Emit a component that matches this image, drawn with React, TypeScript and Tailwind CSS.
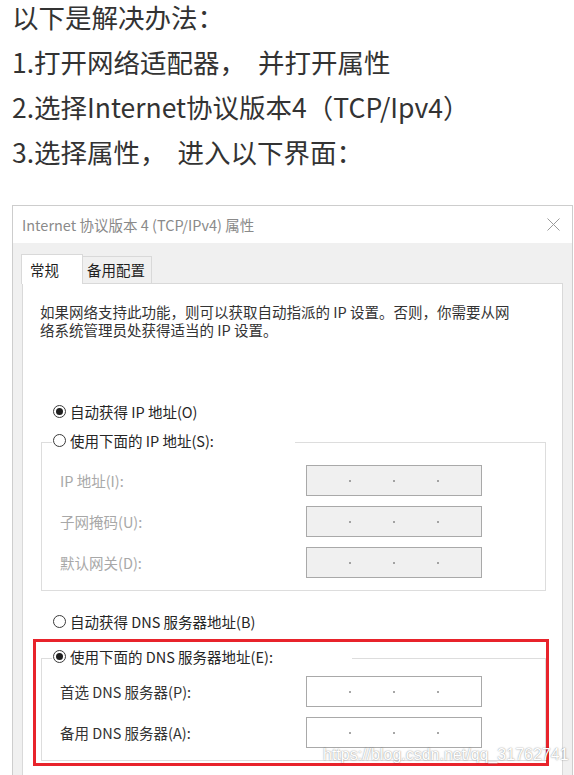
import React from "react";

function Radio({ checked }: { checked?: boolean }) {
  return (
    <span className="w-[13px] h-[13px] rounded-full border border-[#3a3a3a] bg-white flex items-center justify-center shrink-0">
      {checked ? <span className="w-[7px] h-[7px] rounded-full bg-[#1f1f1f]" /> : null}
    </span>
  );
}

function IpBox({ disabled }: { disabled?: boolean }) {
  return (
    <div
      className={
        disabled
          ? "w-[176px] h-[31px] border border-[#a9a9a9] bg-[#f0f0f0] flex items-center"
          : "w-[176px] h-[31px] border border-[#a9a9a9] bg-white flex items-center"
      }
    >
      <span className="flex-1" />
      <span className="w-[2px] h-[2px] rounded-full bg-[#8a8a8a]" />
      <span className="flex-1" />
      <span className="w-[2px] h-[2px] rounded-full bg-[#8a8a8a]" />
      <span className="flex-1" />
      <span className="w-[2px] h-[2px] rounded-full bg-[#8a8a8a]" />
      <span className="flex-1" />
    </div>
  );
}

function Row({ label, disabled }: { label: string; disabled?: boolean }) {
  return (
    <div className="flex items-center h-[31px]">
      <span
        className={
          disabled
            ? "w-[246px] text-[#a8a8a8] whitespace-nowrap"
            : "w-[246px] text-[#333333] whitespace-nowrap"
        }
      >
        {label}
      </span>
      <IpBox disabled={disabled} />
    </div>
  );
}

export default function App() {
  return (
    <div className="w-[574px] h-[775px] bg-white overflow-hidden relative font-['Noto_Sans_CJK_SC',sans-serif]">
      {/* Intro text */}
      <div className="-mt-[6px] pl-[12px] text-[26.5px] leading-[45px] text-[#333333] whitespace-nowrap">
        <div>以下是解决办法：</div>
        <div>
          1.打开网络适配器，<span className="ml-[12px]">并打开属性</span>
        </div>
        <div>2.选择Internet协议版本4（TCP/Ipv4）</div>
        <div>
          3.选择属性，<span className="ml-[11px]">进入以下界面：</span>
        </div>
      </div>

      {/* Dialog */}
      <div className="mt-[31px] ml-[12px] w-[561px] border border-b-0 border-[#cdcdcd] text-[14.5px]">
        {/* Title bar */}
        <div className="h-[37px] bg-white flex items-center justify-between pl-[9px] pr-[12px]">
          <span className="text-[#8a8a8a] whitespace-nowrap">Internet 协议版本 4 (TCP/IPv4) 属性</span>
          <svg width="13" height="13" viewBox="0 0 13 13">
            <path d="M0.5 0.5 L12.5 12.5 M12.5 0.5 L0.5 12.5" stroke="#9a9a9a" strokeWidth="1" fill="none" />
          </svg>
        </div>

        {/* Body */}
        <div className="bg-[#f0f0f0] pt-[11px] px-[9px] h-[600px]">
          {/* Tabs */}
          <div className="flex items-end h-[29px]">
            <div className="relative z-10 -ml-px -mb-px h-[30px] w-[62px] bg-white border border-b-0 border-[#d9d9d9] pl-[8px] flex items-center text-[#1f1f1f]">
              常规
            </div>
            <div className="h-[27px] w-[69px] bg-[#f0f0f0] border border-b-0 border-l-0 border-[#d9d9d9] pl-[4px] flex items-center text-[#1f1f1f]">
              备用配置
            </div>
          </div>

          {/* Panel */}
          <div className="bg-white border border-[#d9d9d9] h-[560px] text-[#262626]">
            <div className="pt-[19px] pl-[17px] leading-[18px] text-[#333333] whitespace-nowrap">
              <div>如果网络支持此功能，则可以获取自动指派的 IP 设置。否则，你需要从网</div>
              <div>络系统管理员处获得适当的 IP 设置。</div>
            </div>

            <div className="mt-[58px] pl-[30px] h-[29px] flex items-center gap-[4px]">
              <Radio checked />
              <span>自动获得 IP 地址(O)</span>
            </div>

            <fieldset className="ml-[18px] w-[505px] border border-[#dddddd] pl-[10px] pb-[12px]">
              <legend className="w-[243px]">
                <div className="h-[33px] pb-[4px] flex items-center gap-[4px] pl-[1px] whitespace-nowrap">
                  <Radio />
                  <span>使用下面的 IP 地址(S):</span>
                </div>
              </legend>
              <div className="pt-[6px] pl-[8px] flex flex-col gap-[10px]">
                <Row label="IP 地址(I):" disabled />
                <Row label="子网掩码(U):" disabled />
                <Row label="默认网关(D):" disabled />
              </div>
            </fieldset>

            <div className="mt-[16px] pl-[30px] h-[29px] flex items-center gap-[4px]">
              <Radio />
              <span>自动获得 DNS 服务器地址(B)</span>
            </div>

            <fieldset className="mt-[6px] ml-[18px] w-[505px] border border-[#dddddd] pl-[10px] pb-[12px]">
              <legend className="w-[300px]">
                <div className="h-[33px] pb-[4px] flex items-center gap-[4px] pl-[1px] whitespace-nowrap">
                  <Radio checked />
                  <span>使用下面的 DNS 服务器地址(E):</span>
                </div>
              </legend>
              <div className="pt-[1px] pl-[8px] flex flex-col gap-[10px]">
                <Row label="首选 DNS 服务器(P):" />
                <Row label="备用 DNS 服务器(A):" />
              </div>
            </fieldset>
          </div>
        </div>
      </div>

      {/* Red annotation box */}
      <div className="absolute left-[33px] top-[639px] w-[516px] h-[127px] border-[3px] border-[#e8232b]" />

      {/* Watermark */}
      <div className="absolute left-[323px] top-[745px] text-[16px] leading-[20px] text-white font-['Liberation_Sans',sans-serif] whitespace-nowrap [text-shadow:0_0_1.5px_rgba(0,0,0,0.55)]">
        https://blog.csdn.net/qq_31762741
      </div>
    </div>
  );
}
